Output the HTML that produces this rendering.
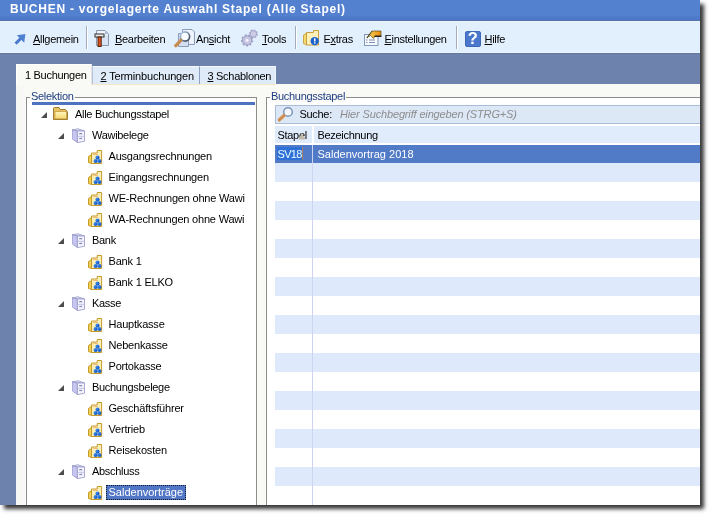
<!DOCTYPE html>
<html><head><meta charset="utf-8">
<style>
*{margin:0;padding:0;box-sizing:border-box}
html,body{width:710px;height:515px;overflow:hidden;background:#fff;font-family:"Liberation Sans",sans-serif;font-size:11px;color:#000;letter-spacing:-0.3px}
.a{position:absolute;white-space:nowrap}
#win{will-change:transform;position:absolute;left:0;top:0;width:700px;height:505px;overflow:hidden;background:#6e82ae;box-shadow:4px 4px 4px rgba(0,0,0,0.78)}
#title{left:0;top:0;width:700px;height:21px;background:linear-gradient(#5381cf 0,#5381cf 16px,#4d7ac8 17px,#4d7ac8 20px,#5573aa 20px)}
#title span{left:10px;top:3px;color:#fff;font-weight:bold;font-size:12px;line-height:12px;letter-spacing:0.75px}
#tb{left:0;top:21px;width:700px;height:33px;background:linear-gradient(#f0f8ff 0,#e2effd 1px,#e2effd 31px,#eaf6ff 31px,#eaf6ff 32px,#63779f 32px)}
.tt{line-height:11px;top:13px}
.sep{position:absolute;top:5px;width:2px;height:23px;border-left:1px solid #a4acbc;border-right:1px solid #fff}
.u{text-decoration:underline}
.tab{position:absolute;line-height:11px}
#page{left:16px;top:84px;width:700px;height:430px;background:linear-gradient(90deg,#f2f6fb 0,#f6f8f2 2px,#f9f8f7 6px,#f9f9f6 10px)}
.gb{position:absolute;border:1px solid #8c8c8c}
.gl{position:absolute;color:#1f3d80;background:#f9f9f6;line-height:11px;padding:0 1px}
.row{position:absolute;line-height:11px}
.grow{position:absolute;left:275px;width:425px;height:19px}
</style></head>
<body>
<div id="win">
  <div id="title" class="a"><span class="a">BUCHEN - vorgelagerte Auswahl Stapel (Alle Stapel)</span></div>
  <div id="tb" class="a">
    <!-- Allgemein -->
    <svg class="a" style="left:10px;top:5px" width="24" height="24" viewBox="0 0 24 24"><path d="M5.6 17.6 L11 12.2" stroke="#4c79ca" stroke-width="3" fill="none"/><path d="M6.8 9.2 L15.4 7.9 L14.2 16.8 Z" fill="#5080d2"/></svg>
    <span class="a tt" style="left:33px"><span class="u">A</span>llgemein</span>
    <div class="sep" style="left:86px"></div>
    <!-- Bearbeiten -->
    <svg class="a" style="left:92px;top:5px" width="20" height="24" viewBox="0 0 20 24"><path d="M4.5 4.5 H13 L16.5 8 V19.5 H4.5 Z" fill="#f0f4fb" stroke="#8a98b0"/><path d="M13 4.5 V8 H16.5 Z" fill="#a8bcdc"/><path d="M9 9 H16 V19 H9Z" fill="#c8d8f0" opacity="0.6"/><rect x="3" y="8" width="9" height="3" fill="#ececec" stroke="#303030"/><rect x="6" y="11" width="3.2" height="9.5" fill="#d8561e" stroke="#4a1a08" stroke-width="0.9"/></svg>
    <span class="a tt" style="left:115px"><span class="u">B</span>earbeiten</span>
    <!-- Ansicht -->
    <svg class="a" style="left:171px;top:5px" width="26" height="24" viewBox="0 0 26 24"><defs><linearGradient id="gl" x1="0" y1="0" x2="1" y2="1"><stop offset="0" stop-color="#b8d4f0"/><stop offset="1" stop-color="#303848"/></linearGradient></defs><path d="M11.5 3.5 H21 L23.5 6 V18.5 H11.5 Z" fill="#eef2fa" stroke="#8a9cb8"/><path d="M7.5 7.5 H17.5 V20.5 H7.5 Z" fill="#d4e0f2" stroke="#8a9cb8"/><circle cx="14" cy="10.5" r="4.6" fill="#f8fbff" stroke="url(#gl)" stroke-width="1.6"/><path d="M4.8 19.6 L9.6 14.6" stroke="#c88c50" stroke-width="3.4" stroke-linecap="round"/></svg>
    <span class="a tt" style="left:196px">An<span class="u">s</span>icht</span>
    <!-- Tools -->
    <svg class="a" style="left:238px;top:5px" width="24" height="24" viewBox="0 0 24 24"><circle cx="15.4" cy="7.9" r="3.6" fill="none" stroke="#a4a4c8" stroke-width="1.8" stroke-dasharray="1.5 1.3"/><circle cx="15.4" cy="7.9" r="3.3" fill="#cbcbe6" stroke="#9c9cc0" stroke-width="0.8"/><circle cx="9.1" cy="14.4" r="5.1" fill="none" stroke="#a0a0c4" stroke-width="2" stroke-dasharray="1.9 1.6"/><circle cx="9.1" cy="14.4" r="4.6" fill="#c6c6e2" stroke="#9494bc" stroke-width="0.9"/><circle cx="9.1" cy="14.4" r="1.4" fill="#f6f6fc"/></svg>
    <span class="a tt" style="left:262px"><span class="u">T</span>ools</span>
    <div class="sep" style="left:295px"></div>
    <!-- Extras -->
    <svg class="a" style="left:300px;top:5px" width="24" height="24" viewBox="0 0 24 24"><path d="M3.5 9 L7 7 V19 L3.5 17.5 Z" fill="#f4d870" stroke="#c8a040" stroke-width="0.9"/><path d="M6.5 6.5 H13.5 V4.5 H18.5 V19 H6.5 Z" fill="#fdf0b8" stroke="#c8a040"/><circle cx="14.7" cy="15.1" r="4.2" fill="#1c62cc"/><rect x="14" y="12.3" width="1.5" height="3.2" fill="#fff"/><rect x="14" y="16.3" width="1.5" height="1.3" fill="#fff"/></svg>
    <span class="a tt" style="left:323.5px">E<span class="u">x</span>tras</span>
    <!-- Einstellungen -->
    <svg class="a" style="left:360px;top:5px" width="24" height="24" viewBox="0 0 24 24"><rect x="4.5" y="8.5" width="13.5" height="11" fill="#f6f9fd" stroke="#8498b8"/><rect x="6" y="13.5" width="1.5" height="1" fill="#8090b0"/><rect x="9" y="13.5" width="6" height="1" fill="#8090b0"/><rect x="6" y="16" width="1.5" height="1" fill="#8090b0"/><rect x="9" y="16" width="6" height="1" fill="#8090b0"/><defs><linearGradient id="ge" x1="0" y1="0" x2="1" y2="0"><stop offset="0" stop-color="#f8e060"/><stop offset="1" stop-color="#e88a10"/></linearGradient></defs><path d="M7 11.5 L12 5 H21 V10 H15 L13.5 12.5 L10.5 9.5 Z" fill="url(#ge)" stroke="#5a4a20" stroke-width="0.7"/><path d="M14.5 10.3 H21.5" stroke="#202020" stroke-width="1.3"/><path d="M7 11.8 L12 5.5" stroke="#303020" stroke-width="1.1" stroke-dasharray="1 0.8"/></svg>
    <span class="a tt" style="left:384.5px"><span class="u">E</span>instellungen</span>
    <div class="sep" style="left:456px"></div>
    <!-- Hilfe -->
    <svg class="a" style="left:465px;top:10px" width="16" height="16" viewBox="0 0 16 16"><rect x="0.5" y="0.5" width="15" height="15" rx="1.5" fill="#4a78cc" stroke="#3e68b8"/><text x="7.6" y="13.4" text-anchor="middle" font-family="Liberation Sans" font-weight="bold" font-size="16.5" fill="#fff">?</text></svg>
    <span class="a tt" style="left:484.5px"><span class="u">H</span>ilfe</span>
  </div>

  <!-- tabs -->
  <div class="a" style="left:92px;top:66px;width:108px;height:18px;background:#e0ebfa;border-top:1px solid #f4f8ff;border-left:1px solid #b4c2da;border-right:1px solid #8fa0bf"></div>
  <div class="a" style="left:200px;top:66px;width:76px;height:18px;background:#e0ebfa;border-top:1px solid #f4f8ff;border-right:1px solid #f0f5fc"></div>
  <div id="page" class="a"></div>
  <div class="a" style="left:92px;top:84px;width:184px;height:1px;background:#f6e8c4"></div>
  <div class="a" style="left:16px;top:64px;width:76px;height:21px;background:#f9f9f6;border-top:1px solid #fff;border-left:1px solid #fff;border-right:1px solid #e4e4e4"></div>
  <span class="tab a" style="left:25px;top:70px">1 Buchungen</span>
  <span class="tab a" style="left:100.5px;top:71px;letter-spacing:-0.18px"><span class="u">2</span> Terminbuchungen</span>
  <span class="tab a" style="left:207.5px;top:71px"><span class="u">3</span> Schablonen</span>

  <!-- left group -->
  <div class="gb" style="left:26px;top:97px;width:231px;height:420px;background:#fff"></div>
  <span class="gl a" style="left:30px;top:91px">Selektion</span>
  <div class="a" style="left:32px;top:102px;width:223px;height:3px;background:#4d72c0"></div>
  <svg width="0" height="0" style="position:absolute"><defs>
<linearGradient id="gy" x1="0" y1="0" x2="0" y2="1"><stop offset="0" stop-color="#fff6c0"/><stop offset="1" stop-color="#f6d870"/></linearGradient>
<linearGradient id="gb" x1="0" y1="0" x2="1" y2="1"><stop offset="0" stop-color="#4aa0ff"/><stop offset="1" stop-color="#0840b0"/></linearGradient>
<g id="ifold"><path d="M0.5 12.5 V1.5 Q0.5 0.5 1.5 0.5 H6 L7 2.5 H12.5 L14.5 5 V12.5 Z" fill="#e8c260" stroke="#9c7c30"/><rect x="2" y="4.5" width="11.5" height="7.3" fill="url(#gy)" stroke="#c8a040" stroke-width="0.8"/></g>
<g id="icab"><path d="M0.3 1.8 L6 0.8 L12.5 3 L5.4 3 Z" fill="#e4e4fa" stroke="#9898c8" stroke-width="0.8"/><path d="M0.3 1.8 L5.4 3 V14.6 L0.3 10.9 Z" fill="#c6c6f0" stroke="#9494c8" stroke-width="0.8"/><path d="M5.4 3 H12.5 V13.2 L5.4 14.6 Z" fill="#f6f6ff" stroke="#9494c8" stroke-width="0.8"/><path d="M5.4 8.3 H12.5" stroke="#b4b4dc" stroke-width="0.8"/><rect x="7.2" y="5" width="3" height="1.3" fill="#8a8abc"/><rect x="7.2" y="9.8" width="3" height="1.3" fill="#8a8abc"/></g>
<g id="ileaf"><path d="M2.5 8.5 L5.5 6.5 V15.5 L2.5 14.5 Z" fill="#f2d058" stroke="#c49a2a"/><path d="M5.5 5 H11.2 V2.5 H15.6 V15.5 H5.5 Z" fill="#fbefb8" stroke="#c49a2a"/><path d="M7 6.5 H12" stroke="#f0b070" stroke-width="0.8"/><circle cx="11.5" cy="9.6" r="2.1" fill="url(#gb)"/><circle cx="9.6" cy="13" r="2.1" fill="url(#gb)"/><circle cx="13.4" cy="13" r="2.1" fill="url(#gb)"/></g>
</defs></svg>
  <svg class="a" style="left:41px;top:112px" width="6" height="6"><path d="M0 6 L6 0 L6 6 Z" fill="#4c4c4c"/></svg>
  <svg class="a" style="left:53px;top:107px" width="16" height="14" viewBox="0 0 16 14"><use href="#ifold"/></svg>
  <span class="row a" style="left:75px;top:109px">Alle Buchungsstapel</span>
  <svg class="a" style="left:58px;top:133px" width="6" height="6"><path d="M0 6 L6 0 L6 6 Z" fill="#4c4c4c"/></svg>
  <svg class="a" style="left:72px;top:128px" width="13" height="15" viewBox="0 0 13 15"><use href="#icab"/></svg>
  <span class="row a" style="left:92px;top:130px">Wawibelege</span>
  <svg class="a" style="left:86px;top:148px" width="18" height="18" viewBox="0 0 18 18"><use href="#ileaf"/></svg>
  <span class="row a" style="left:108.5px;top:151px;letter-spacing:-0.2px">Ausgangsrechnungen</span>
  <svg class="a" style="left:86px;top:169px" width="18" height="18" viewBox="0 0 18 18"><use href="#ileaf"/></svg>
  <span class="row a" style="left:108.5px;top:172px;letter-spacing:-0.2px">Eingangsrechnungen</span>
  <svg class="a" style="left:86px;top:190px" width="18" height="18" viewBox="0 0 18 18"><use href="#ileaf"/></svg>
  <span class="row a" style="left:108.5px;top:193px;letter-spacing:-0.2px">WE-Rechnungen ohne Wawi</span>
  <svg class="a" style="left:86px;top:211px" width="18" height="18" viewBox="0 0 18 18"><use href="#ileaf"/></svg>
  <span class="row a" style="left:108.5px;top:214px;letter-spacing:-0.2px">WA-Rechnungen ohne Wawi</span>
  <svg class="a" style="left:58px;top:238px" width="6" height="6"><path d="M0 6 L6 0 L6 6 Z" fill="#4c4c4c"/></svg>
  <svg class="a" style="left:72px;top:233px" width="13" height="15" viewBox="0 0 13 15"><use href="#icab"/></svg>
  <span class="row a" style="left:92px;top:235px">Bank</span>
  <svg class="a" style="left:86px;top:253px" width="18" height="18" viewBox="0 0 18 18"><use href="#ileaf"/></svg>
  <span class="row a" style="left:108.5px;top:256px;letter-spacing:-0.2px">Bank 1</span>
  <svg class="a" style="left:86px;top:274px" width="18" height="18" viewBox="0 0 18 18"><use href="#ileaf"/></svg>
  <span class="row a" style="left:108.5px;top:277px;letter-spacing:-0.2px">Bank 1 ELKO</span>
  <svg class="a" style="left:58px;top:301px" width="6" height="6"><path d="M0 6 L6 0 L6 6 Z" fill="#4c4c4c"/></svg>
  <svg class="a" style="left:72px;top:296px" width="13" height="15" viewBox="0 0 13 15"><use href="#icab"/></svg>
  <span class="row a" style="left:92px;top:298px">Kasse</span>
  <svg class="a" style="left:86px;top:316px" width="18" height="18" viewBox="0 0 18 18"><use href="#ileaf"/></svg>
  <span class="row a" style="left:108.5px;top:319px;letter-spacing:-0.2px">Hauptkasse</span>
  <svg class="a" style="left:86px;top:337px" width="18" height="18" viewBox="0 0 18 18"><use href="#ileaf"/></svg>
  <span class="row a" style="left:108.5px;top:340px;letter-spacing:-0.2px">Nebenkasse</span>
  <svg class="a" style="left:86px;top:358px" width="18" height="18" viewBox="0 0 18 18"><use href="#ileaf"/></svg>
  <span class="row a" style="left:108.5px;top:361px;letter-spacing:-0.2px">Portokasse</span>
  <svg class="a" style="left:58px;top:385px" width="6" height="6"><path d="M0 6 L6 0 L6 6 Z" fill="#4c4c4c"/></svg>
  <svg class="a" style="left:72px;top:380px" width="13" height="15" viewBox="0 0 13 15"><use href="#icab"/></svg>
  <span class="row a" style="left:92px;top:382px">Buchungsbelege</span>
  <svg class="a" style="left:86px;top:400px" width="18" height="18" viewBox="0 0 18 18"><use href="#ileaf"/></svg>
  <span class="row a" style="left:108.5px;top:403px;letter-spacing:-0.2px">Gesch&auml;ftsf&uuml;hrer</span>
  <svg class="a" style="left:86px;top:421px" width="18" height="18" viewBox="0 0 18 18"><use href="#ileaf"/></svg>
  <span class="row a" style="left:108.5px;top:424px;letter-spacing:-0.2px">Vertrieb</span>
  <svg class="a" style="left:86px;top:442px" width="18" height="18" viewBox="0 0 18 18"><use href="#ileaf"/></svg>
  <span class="row a" style="left:108.5px;top:445px;letter-spacing:-0.2px">Reisekosten</span>
  <svg class="a" style="left:58px;top:469px" width="6" height="6"><path d="M0 6 L6 0 L6 6 Z" fill="#4c4c4c"/></svg>
  <svg class="a" style="left:72px;top:464px" width="13" height="15" viewBox="0 0 13 15"><use href="#icab"/></svg>
  <span class="row a" style="left:92px;top:466px">Abschluss</span>
  <svg class="a" style="left:86px;top:484px" width="18" height="18" viewBox="0 0 18 18"><use href="#ileaf"/></svg>
  <div class="a" style="left:106px;top:485px;width:80px;height:15px;background:#5276c6;border:1px dotted #101830"></div>
  <span class="row a" style="left:108.5px;top:487px;color:#fff;letter-spacing:0">Saldenvortr&auml;ge</span>

  <!-- right group -->
  <div class="gb" style="left:266px;top:97px;width:450px;height:420px;background:#fff"></div>
  <span class="gl a" style="left:270px;top:91px">Buchungsstapel</span>
  <div class="a" style="left:275px;top:105px;width:430px;height:19px;background:#dde8f7;border:1px solid #a9bdd9"></div>
  <svg class="a" style="left:276px;top:105px" width="18" height="18" viewBox="0 0 18 18"><circle cx="12" cy="7" r="4.3" fill="#f2f8fe" stroke="#7c94b8" stroke-width="1.5"/><path d="M3.2 15 L8 10.5" stroke="#d08e50" stroke-width="3.2" stroke-linecap="round"/></svg>
  <span class="a" style="left:299.5px;top:109px;line-height:11px">Suche:</span>
  <span class="a" style="left:340px;top:109px;line-height:11px;font-style:italic;color:#8c8c8c;letter-spacing:-0.15px">Hier Suchbegriff eingeben (STRG+S)</span>

  <!-- grid -->
  <div class="a" style="left:275px;top:126px;width:37px;height:17px;background:#e0ebfb"></div>
  <div class="a" style="left:314px;top:126px;width:400px;height:17px;background:#e0ebfb"></div>
  <span class="a" style="left:277.5px;top:130px;line-height:11px">Stapel</span>
  <span class="a" style="left:317.5px;top:130px;line-height:11px">Bezeichnung</span>
  <div class="grow" style="top:145px;height:18px;background:#517ac7"></div>
  <div class="a" style="left:277px;top:147px;width:25px;height:13px;background:#2f6fd8"></div>
  <div class="a" style="left:302px;top:147px;width:1px;height:13px;background:#a88060"></div>
  <span class="a" style="left:277.5px;top:149px;line-height:11px;color:#e8ffff;letter-spacing:-0.7px">SV18</span>
  <span class="a" style="left:317.5px;top:149px;line-height:11px;color:#fff;letter-spacing:0">Saldenvortrag 2018</span>
  <div class="grow" style="top:163px;background:#deeafb"></div>
  <div class="grow" style="top:201px;background:#deeafb"></div>
  <div class="grow" style="top:239px;background:#deeafb"></div>
  <div class="grow" style="top:277px;background:#deeafb"></div>
  <div class="grow" style="top:315px;background:#deeafb"></div>
  <div class="grow" style="top:353px;background:#deeafb"></div>
  <div class="grow" style="top:391px;background:#deeafb"></div>
  <div class="grow" style="top:429px;background:#deeafb"></div>
  <div class="grow" style="top:467px;background:#deeafb"></div>
  <div class="a" style="left:312px;top:145px;width:1px;height:360px;background:#ced3f0"></div>
  <svg class="a" style="left:298px;top:132px" width="8" height="8" viewBox="0 0 8 8"><path d="M0.6 7.4 L3.8 0.8 L7.4 7.4 Z" fill="#c2baa8"/></svg>
</div>
</body></html>
